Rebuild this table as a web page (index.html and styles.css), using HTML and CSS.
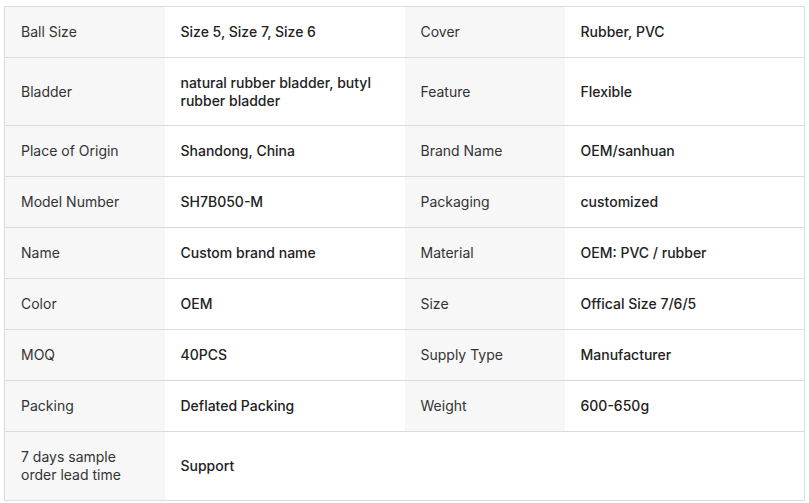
FILE: index.html
```html
<!DOCTYPE html>
<html lang="en">
<head>
  <meta charset="UTF-8">
  <title>Product Attributes</title>
  <link rel="stylesheet" href="styles.css">
</head>
<body>

<table class="attr-table">
  <colgroup>
    <col class="col-label">
    <col class="col-value">
    <col class="col-label">
    <col class="col-value-last">
  </colgroup>
  <tr>
    <td class="label">Ball Size</td>
    <td class="value">Size 5, Size 7, Size 6</td>
    <td class="label">Cover</td>
    <td class="value">Rubber, PVC</td>
  </tr>
  <tr class="tight">
    <td class="label">Bladder</td>
    <td class="value">natural rubber bladder, butyl rubber bladder</td>
    <td class="label">Feature</td>
    <td class="value">Flexible</td>
  </tr>
  <tr>
    <td class="label">Place of Origin</td>
    <td class="value">Shandong, China</td>
    <td class="label">Brand Name</td>
    <td class="value">OEM/sanhuan</td>
  </tr>
  <tr>
    <td class="label">Model Number</td>
    <td class="value">SH7B050-M</td>
    <td class="label">Packaging</td>
    <td class="value">customized</td>
  </tr>
  <tr>
    <td class="label">Name</td>
    <td class="value">Custom brand name</td>
    <td class="label">Material</td>
    <td class="value">OEM: PVC / rubber</td>
  </tr>
  <tr>
    <td class="label">Color</td>
    <td class="value">OEM</td>
    <td class="label">Size</td>
    <td class="value">Offical Size 7/6/5</td>
  </tr>
  <tr>
    <td class="label">MOQ</td>
    <td class="value">40PCS</td>
    <td class="label">Supply Type</td>
    <td class="value">Manufacturer</td>
  </tr>
  <tr>
    <td class="label">Packing</td>
    <td class="value">Deflated Packing</td>
    <td class="label">Weight</td>
    <td class="value">600-650g</td>
  </tr>
  <tr class="last">
    <td class="label">7 days sample order lead time</td>
    <td class="value">Support</td>
    <td class="empty"></td>
    <td class="empty"></td>
  </tr>
</table>

</body>
</html>
```

FILE: styles.css
```css
body {
  font-family: 'Inter', 'Liberation Sans', sans-serif;
  background-color: #fff;
  margin: 0;
  padding: 6px 4px;
  color: #222;
}
.attr-table {
  width: 801px;
  border-collapse: collapse;
  border: 1px solid #dcdcdc;
  table-layout: fixed;
  font-size: 14px;
  line-height: 18px;
}
.col-label {
  width: 160px;
}
.col-value {
  width: 240px;
}
.attr-table td {
  padding: 16px;
  vertical-align: middle;
  border-bottom: 1px solid #dcdcdc;
}
.attr-table .tight td {
  padding-bottom: 15px;
}
.attr-table .last td {
  border-bottom: none;
}
.attr-table .label {
  background-color: #f7f7f7;
  color: #333;
  font-weight: 400;
}
.attr-table .value {
  background-color: #fff;
  color: #222;
  font-weight: 500;
}
.attr-table .empty {
  background-color: #fff;
}
```
